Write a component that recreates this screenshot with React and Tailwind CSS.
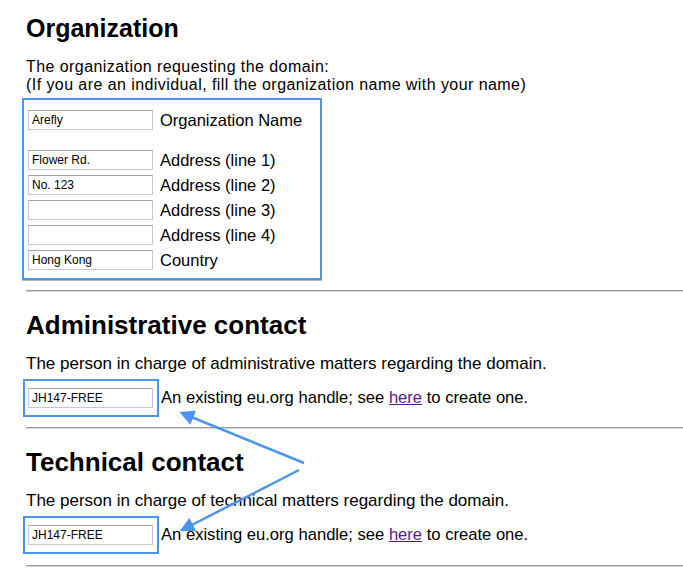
import React from 'react'

const inputCls =
  'block h-[20px] w-[125px] border border-[#c4c7d0] border-t-[#a3a3a3] bg-white pl-[3px] text-[12px] leading-[18px] text-black outline-none'

function Field({ value, label }) {
  return (
    <div className="flex h-[20px] items-center">
      <input className={inputCls} defaultValue={value} readOnly />
      <span className="ml-[7px] text-[16.5px] leading-[20px]">{label}</span>
    </div>
  )
}

function Rule() {
  return <div className="h-[2px] border-t border-[#9a9a9a] bg-[#d6d6d6]" />
}

function Contact({ title, what, value }) {
  return (
    <>
      <h2 className="mt-[15px] text-[26px] font-bold leading-[36px]">{title}</h2>
      <p className="mt-[12px] text-[17px] leading-[18px]">
        The person in charge of {what} matters regarding the domain.
      </p>
      <div className="mt-[6px] flex items-center">
        <div className="-ml-[3px] border-2 border-[#4b95ee] py-[7px] pl-[3px] pr-[4px]">
          <input className={inputCls} defaultValue={value} readOnly />
        </div>
        <span className="ml-[2px] text-[16.6px]">
          An existing eu.org handle; see{' '}
          <a href="#" className="text-[#551a8b] underline">here</a> to create one.
        </span>
      </div>
    </>
  )
}

export default function App() {
  return (
    <div
      className="relative h-[572px] overflow-hidden bg-white pl-[26px] text-black"
      style={{ fontFamily: '"Liberation Sans", Arial, sans-serif' }}
    >
      <h1 className="pt-[10px] text-[25px] font-bold leading-[36px]">Organization</h1>
      <p className="mt-[12px] text-[16px] leading-[18px] tracking-[0.43px]">
        The organization requesting the domain:
        <br />
        (If you are an individual, fill the organization name with your name)
      </p>

      <div className="-ml-[4px] mt-[4px] flex w-[300px] flex-col gap-[5px] border-2 border-[#4b95ee] pb-[8px] pl-[4px] pt-[10px] shadow-[0_1px_0_#b8b8b8]">
        <Field value="Arefly" label="Organization Name" />
        <div className="h-[10px]" />
        <Field value="Flower Rd." label="Address (line 1)" />
        <Field value="No. 123" label="Address (line 2)" />
        <Field value="" label="Address (line 3)" />
        <Field value="" label="Address (line 4)" />
        <Field value="Hong Kong" label="Country" />
      </div>

      <div className="mt-[10px]">
        <Rule />
      </div>

      <Contact title="Administrative contact" what="administrative" value="JH147-FREE" />
      <div className="mt-[10px]">
        <Rule />
      </div>
      <Contact title="Technical contact" what="technical" value="JH147-FREE" />
      <div className="mt-[11px]">
        <Rule />
      </div>

      <svg className="pointer-events-none absolute left-0 top-0" width="683" height="572">
        <defs>
          <marker id="head" markerWidth="6" markerHeight="6" refX="4" refY="3" orient="auto" markerUnits="strokeWidth">
            <path d="M0,0 L6,3 L0,6 z" fill="#4b95ee" />
          </marker>
        </defs>
        <line x1="304" y1="463" x2="184" y2="414" stroke="#4b95ee" strokeWidth="2.5" markerEnd="url(#head)" />
        <line x1="299" y1="470" x2="184" y2="529" stroke="#4b95ee" strokeWidth="2.5" markerEnd="url(#head)" />
      </svg>
    </div>
  )
}
